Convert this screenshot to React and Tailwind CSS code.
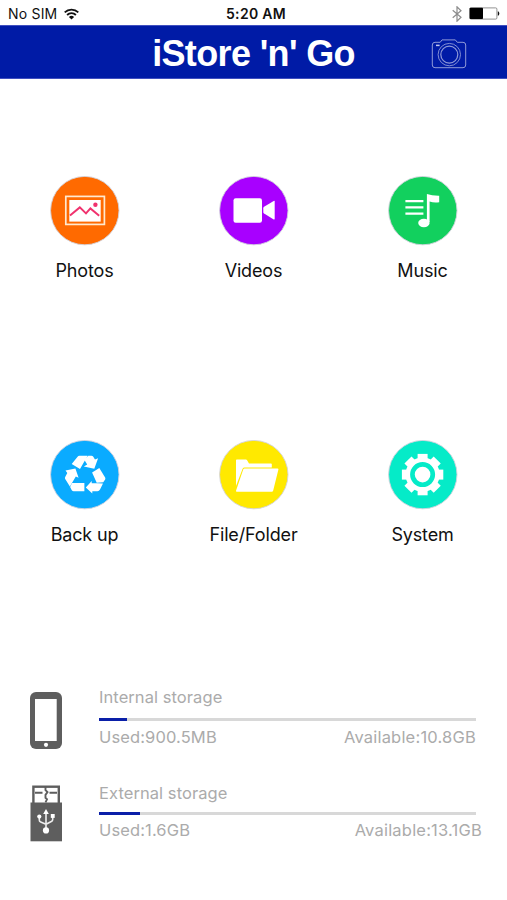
import React from 'react';

function WifiIcon() {
  return (
    <svg className="w-[15px] h-[12px]" viewBox="0 0 15 12" fill="none" stroke="#111" strokeWidth="1.8">
      <path d="M0.7 4.4a9.7 9.7 0 0 1 13.6 0" />
      <path d="M3.1 7a6.2 6.2 0 0 1 8.8 0" />
      <path d="M7.5 11.6 4.9 9a3.7 3.7 0 0 1 5.2 0z" fill="#111" stroke="none" />
    </svg>
  );
}

function BluetoothIcon() {
  return (
    <svg className="w-[10px] h-[16px]" viewBox="0 0 10 16" fill="none" stroke="#8c8c8c" strokeWidth="1.2">
      <path d="M0.7 4.2 9 11.3 5 15.2V0.8l4 3.9-8.3 7.1" />
    </svg>
  );
}

function BatteryIcon() {
  return (
    <svg className="w-[31px] h-[13px]" viewBox="0 0 31 13">
      <rect x="0.9" y="0.9" width="27" height="11.2" rx="1.2" fill="#fff" stroke="#777" strokeWidth="0.8" />
      <rect x="0.6" y="0.7" width="13.4" height="11.4" rx="0.8" fill="#000" />
      <path d="M28.8 4.2c2 .6 2 4 0 4.6z" fill="#111" />
    </svg>
  );
}

function CameraIcon() {
  return (
    <svg className="w-[36px] h-[30px]" viewBox="0 0 36 30" fill="none" stroke="#8f9ad8" strokeWidth="1">
      <path d="M4 3.3h5.2L11 .9h13.3l2 2.4H32a2.7 2.7 0 0 1 2.7 2.7v20a2.7 2.7 0 0 1-2.7 2.7H4A2.7 2.7 0 0 1 1.3 26V6A2.7 2.7 0 0 1 4 3.3z" />
      <circle cx="18.3" cy="15.6" r="11.2" strokeWidth="0.9" />
      <circle cx="18.3" cy="15.6" r="8.5" strokeWidth="1.2" />
      <path d="M5 6.4h3.6" stroke="#c3c9ee" strokeWidth="1.5" />
    </svg>
  );
}

function PhotosIcon() {
  return (
    <>
      <rect x="15.8" y="20.4" width="38.6" height="28" fill="none" stroke="#ffe9cf" strokeWidth="1.7" />
      <rect x="19.3" y="24" width="31.4" height="21.6" fill="#fff" />
      <path d="m20 39.6 9.8-8.2 6.2 6 4.4-5 8.8 7.3" fill="none" stroke="#f0326e" strokeWidth="1.9" />
      <circle cx="45.4" cy="28.8" r="2.2" fill="#f0326e" />
    </>
  );
}

function VideosIcon() {
  return (
    <g fill="#fff">
      <rect x="14.5" y="22.2" width="28.5" height="24.5" rx="2.2" />
      <path d="M44.3 32.2q0-.9.8-1.4l9.6-5.8q1-.5 1 .6v17.2q0 1.1-1 .6l-9.6-5.8q-.8-.5-.8-1.4z" />
    </g>
  );
}

function MusicIcon() {
  return (
    <g fill="#fff">
      <path d="M17.4 25.2h18M17.4 31.4h18M17.4 37.7h18" stroke="#fff" strokeWidth="2.3" />
      <path d="M38.9 18q5 1.8 12.3 1.7v6.5q-5.3.7-9.6-.6V46h-2.7z" />
      <ellipse cx="35.9" cy="47" rx="5.7" ry="4.2" />
    </g>
  );
}

function BackupIcon() {
  return (
    <g fill="#fff">
      <path d="M27.6 16.8q.6-1 1.8-1h8.2L30 28.9l-8.3-5z" />
      <path d="M38.3 15.7h3.2q1 0 1.6.9l1.9 3 3.1-1.3-3.8 10.4-10.5-2.2 3.4-1.9-3.1-5z" />
      <path d="m15.5 30.4 9.9-2 3.2 9.3-2.8-1.2-5.9 9.9-4.7-7.3q-.6-1 0-2l2.1-4.1z" />
      <path d="M22 42.9h12.4v8.4H23.6q-1.2 0-1.8-1l-1.7-3.3z" />
      <path d="m42.1 32.4 7.2-4.4 5.8 9.4q.5 1 0 2l-1.8 2.9-6.6.4z" />
      <path d="m35.8 47.4 5.9-6.3v2.2h5.5l5.8.2-3 6.1q-.8 1.7-2.6 1.7h-5.1v2.3z" />
    </g>
  );
}

function FolderIcon() {
  return (
    <g fill="#fff">
      <path d="M17 20.4q0-.8.8-.8h9.1q.8 0 1.2.7l1.9 3.2h22q.8 0 .8.8v3.2H25.6q-1.4 0-2 1.3L17 46z" />
      <path d="M24.2 29.6q.4-1 1.4-1h32.9q1.2 0 .9 1l-5.2 20.9q-.3 1.2-1.5 1.2H17.8q-1.1 0-.7-1.1z" />
    </g>
  );
}

const teeth = [0, 45, 90, 135, 180, 225, 270, 315];

function SystemIcon() {
  return (
    <g fill="#fff">
      <circle cx="34.6" cy="34.6" r="14.8" fill="none" stroke="#fff" strokeWidth="4.6" />
      {teeth.map((a) => (
        <path key={a} d="M29.6 20v-6.1h10V20z" transform={`rotate(${a} 34.6 34.6)`} />
      ))}
      <circle cx="34.6" cy="34.6" r="7.8" />
    </g>
  );
}

function PhoneIcon() {
  return (
    <svg className="w-[32px] h-[57px]" viewBox="0 0 32 57">
      <rect width="32" height="57" rx="6" fill="#5e5e5e" />
      <rect x="5" y="7" width="21.7" height="42" fill="#fff" />
      <circle cx="16" cy="52.8" r="2.1" fill="#fff" />
    </svg>
  );
}

function UsbIcon() {
  return (
    <svg className="w-[32px] h-[57px]" viewBox="0 0 32 57">
      <rect x="3.4" y="1.7" width="25.4" height="18" fill="#fff" stroke="#5e5e5e" strokeWidth="2.4" />
      <path d="M5 7.8h7.5M19.5 7.8H27M15.5 1v4.2l2 2-2 2.6v3l1.5 1.5-1.5 3" fill="none" stroke="#5e5e5e" strokeWidth="1.9" />
      <rect x="0.5" y="17.5" width="31.5" height="38.8" fill="#5e5e5e" />
      <g fill="none" stroke="#eee" strokeWidth="1.6">
        <path d="M16 28v17M9.3 31.5v3.6q0 1.4 1.4 1.9l5.3 2.3M22.7 31v3.6q0 1.4-1.4 1.9L16 39.3" />
      </g>
      <g fill="#fff">
        <path d="m16 24 2.8 5h-5.6z" />
        <circle cx="16" cy="45.4" r="3.1" />
        <circle cx="9.3" cy="31.6" r="2.1" />
        <rect x="20.8" y="29" width="3.9" height="3.9" />
      </g>
    </svg>
  );
}

const menu = [
  { label: 'Photos', color: '#ff6a00', Icon: PhotosIcon },
  { label: 'Videos', color: '#a800ff', Icon: VideosIcon },
  { label: 'Music', color: '#12d05e', Icon: MusicIcon },
  { label: 'Back up', color: '#0aabff', Icon: BackupIcon },
  { label: 'File/Folder', color: '#ffe900', Icon: FolderIcon },
  { label: 'System', color: '#05ebc8', Icon: SystemIcon },
];

function MenuItem({ label, color, Icon }) {
  return (
    <button className="flex h-[264px] flex-col items-center">
      <svg className="w-[70px] h-[70px]" viewBox="0 0 70 70">
        <circle cx="34.8" cy="34.6" r="34.2" fill={color} stroke="#d2d2dc" strokeWidth="0.9" />
        <Icon />
      </svg>
      <span className="mt-[11px] text-[18px] leading-[28px] tracking-[-0.15px] text-[#111]">{label}</span>
    </button>
  );
}

function Storage({ icon, title, used, available, percent, wide }) {
  return (
    <div className="flex pl-[30px]">
      <div className={`w-[69px] shrink-0 ${wide ? 'pt-[4px]' : 'pt-[7px]'}`}>{icon}</div>
      <div className="w-[377px] text-[16.5px] leading-[24px] text-[#ababab]">
        <div className="tracking-[0.07px]">{title}</div>
        <div className={`h-[3px] bg-[#d8d8d8] ${wide ? 'mt-[7px]' : 'mt-[9px]'}`}>
          <div className="h-full bg-[#0a1fa8]" style={{ width: `${percent}%` }} />
        </div>
        <div className={`flex justify-between whitespace-nowrap ${wide ? '-mr-[6px] mt-[3px]' : 'mt-[4px]'}`}>
          <span className="tracking-[0.12px]">Used:{used}</span>
          <span className="tracking-[0.2px]">Available:{available}</span>
        </div>
      </div>
    </div>
  );
}

export default function App() {
  return (
    <div className="h-[900px] w-[507px] overflow-hidden bg-white font-['Inter',sans-serif]">
      {/* Status bar */}
      <div className="grid h-[25px] grid-cols-3 items-center pt-[2px] text-[14px] text-[#111]">
        <div className="flex items-center gap-[7px] pl-[8px]">
          <span className="tracking-[0.2px]">No SIM</span>
          <WifiIcon />
        </div>
        <div className="pl-[5px] text-center font-semibold tracking-[0.3px]">5:20 AM</div>
        <div className="flex items-center justify-end gap-[7px] pr-[7px]">
          <BluetoothIcon />
          <BatteryIcon />
        </div>
      </div>

      {/* Header */}
      <header className="grid h-[54px] grid-cols-[1fr_auto_1fr] items-center border-y border-[#4050c0] bg-[#001ba6]">
        <div />
        <h1 className="pt-[3px] font-['Liberation_Sans',sans-serif] text-[36px] leading-[49px] font-bold tracking-[-0.65px] text-white">
          iStore 'n' Go
        </h1>
        <button className="justify-self-end pt-[3px] pr-[40px]" aria-label="Camera">
          <CameraIcon />
        </button>
      </header>

      <main className="grid grid-cols-3 pt-[97px]">
        {menu.map((item) => (
          <MenuItem key={item.label} {...item} />
        ))}
      </main>

      <section className="-mt-[19px] flex flex-col gap-[32px]">
        <Storage icon={<PhoneIcon />} title="Internal storage" used="900.5MB" available="10.8GB" percent={7.4} />
        <Storage icon={<UsbIcon />} title="External storage" used="1.6GB" available="13.1GB" percent={11} wide />
      </section>
    </div>
  );
}
